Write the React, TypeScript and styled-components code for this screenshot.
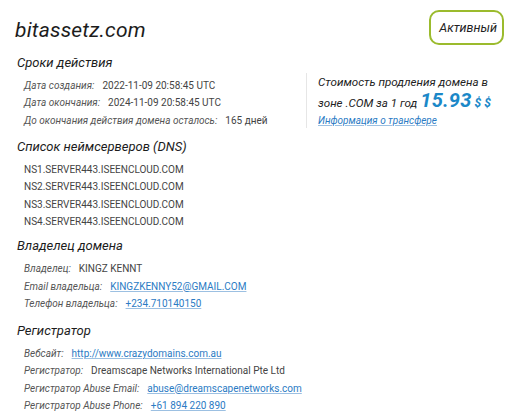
import styled, { createGlobalStyle } from "styled-components";

const GlobalStyle = createGlobalStyle`
  body {
    margin: 0;
    background: #fff;
    font-family: Roboto, "Liberation Sans", sans-serif;
    color: #333;
  }
`;

const Page = styled.div`
  width: 512px;
  height: 418px;
  box-sizing: border-box;
  padding: 10px 8px 0 15px;
  overflow: hidden;
`;

const Header = styled.div`
  display: flex;
  justify-content: space-between;
  align-items: flex-start;
`;

const DomainName = styled.h1`
  margin: 8px 0 0;
  font-size: 21px;
  font-weight: 400;
  font-style: italic;
  color: #1c1c1c;
  letter-spacing: 0.2px;
`;

const StatusBadge = styled.div`
  box-sizing: border-box;
  height: 35px;
  display: flex;
  align-items: center;
  border: 2px solid #9bbb2d;
  border-radius: 10px;
  padding: 0 5px 0 8px;
  font-size: 12.5px;
  font-style: italic;
  color: #222;
`;

const TopRow = styled.div`
  display: flex;
  align-items: flex-start;
`;

const Section = styled.section<{ $top?: number }>`
  margin-top: ${(p) => p.$top ?? 0}px;
`;

const SectionTitle = styled.h2`
  margin: 0 0 7px 2px;
  font-size: 13px;
  font-weight: 400;
  font-style: italic;
  color: #1c1c1c;
`;

const Rows = styled.div`
  display: flex;
  flex-direction: column;
  padding-left: 9px;
`;

const Row = styled.div`
  height: 17.3px;
  display: flex;
  align-items: center;
  font-size: 10px;
  white-space: nowrap;
`;

const Label = styled.span`
  font-style: italic;
  color: #555;
  margin-right: 8px;
`;

const Value = styled.span`
  color: #444;
`;

const LinkValue = styled.a`
  color: #2b7bc4;
  text-decoration: underline;
  text-decoration-color: #9cc0e2;
`;

const PricePanel = styled.div`
  margin-left: auto;
  margin-top: 28px;
  width: 186px;
  border-left: 1px solid #e6e6e6;
  padding: 2px 0 2px 11px;
  font-size: 11.6px;
  font-style: italic;
  color: #222;
  white-space: nowrap;
`;

const PriceCaption = styled.div`
  line-height: 15px;
`;

const PriceLine = styled.div`
  display: flex;
  align-items: baseline;
  gap: 3px;
  line-height: 20px;
`;

const Price = styled.span`
  font-size: 20px;
  font-weight: 700;
  color: #1b88c8;
  letter-spacing: 0.2px;
`;

const Currency = styled.span`
  font-size: 12px;
  font-weight: 700;
  color: #1b88c8;
`;

const TransferLink = styled.a`
  display: block;
  margin-top: 2px;
  font-size: 10px;
  color: #2b7bc4;
  text-decoration: underline;
  text-decoration-color: #9cc0e2;
`;

const nameServers = [
  "NS1.SERVER443.ISEENCLOUD.COM",
  "NS2.SERVER443.ISEENCLOUD.COM",
  "NS3.SERVER443.ISEENCLOUD.COM",
  "NS4.SERVER443.ISEENCLOUD.COM",
];

export default function App() {
  return (
    <Page>
      <GlobalStyle />
      <Header>
        <DomainName>bitassetz.com</DomainName>
        <StatusBadge>Активный</StatusBadge>
      </Header>

      <TopRow>
        <Section $top={10}>
          <SectionTitle>Сроки действия</SectionTitle>
          <Rows>
            <Row>
              <Label>Дата создания:</Label>
              <Value>2022-11-09 20:58:45 UTC</Value>
            </Row>
            <Row>
              <Label>Дата окончания:</Label>
              <Value>2024-11-09 20:58:45 UTC</Value>
            </Row>
            <Row>
              <Label>До окончания действия домена осталось:</Label>
              <Value>165 дней</Value>
            </Row>
          </Rows>
        </Section>
        <PricePanel>
          <PriceCaption>Стоимость продления домена в</PriceCaption>
          <PriceLine>
            <span>зоне .COM за 1 год</span>
            <Price>15.93</Price>
            <Currency>$ $</Currency>
          </PriceLine>
          <TransferLink href="#">Информация о трансфере</TransferLink>
        </PricePanel>
      </TopRow>

      <Section $top={10}>
        <SectionTitle>Список неймсерверов (DNS)</SectionTitle>
        <Rows>
          {nameServers.map((ns) => (
            <Row key={ns}>
              <Value>{ns}</Value>
            </Row>
          ))}
        </Rows>
      </Section>

      <Section $top={8}>
        <SectionTitle>Владелец домена</SectionTitle>
        <Rows>
          <Row>
            <Label>Владелец:</Label>
            <Value>KINGZ KENNT</Value>
          </Row>
          <Row>
            <Label>Email владельца:</Label>
            <LinkValue href="#">KINGZKENNY52@GMAIL.COM</LinkValue>
          </Row>
          <Row>
            <Label>Телефон владельца:</Label>
            <LinkValue href="#">+234.710140150</LinkValue>
          </Row>
        </Rows>
      </Section>

      <Section $top={11}>
        <SectionTitle>Регистратор</SectionTitle>
        <Rows>
          <Row>
            <Label>Вебсайт:</Label>
            <LinkValue href="#">http://www.crazydomains.com.au</LinkValue>
          </Row>
          <Row>
            <Label>Регистратор:</Label>
            <Value>Dreamscape Networks International Pte Ltd</Value>
          </Row>
          <Row>
            <Label>Регистратор Abuse Email:</Label>
            <LinkValue href="#">abuse@dreamscapenetworks.com</LinkValue>
          </Row>
          <Row>
            <Label>Регистратор Abuse Phone:</Label>
            <LinkValue href="#">+61 894 220 890</LinkValue>
          </Row>
        </Rows>
      </Section>
    </Page>
  );
}
